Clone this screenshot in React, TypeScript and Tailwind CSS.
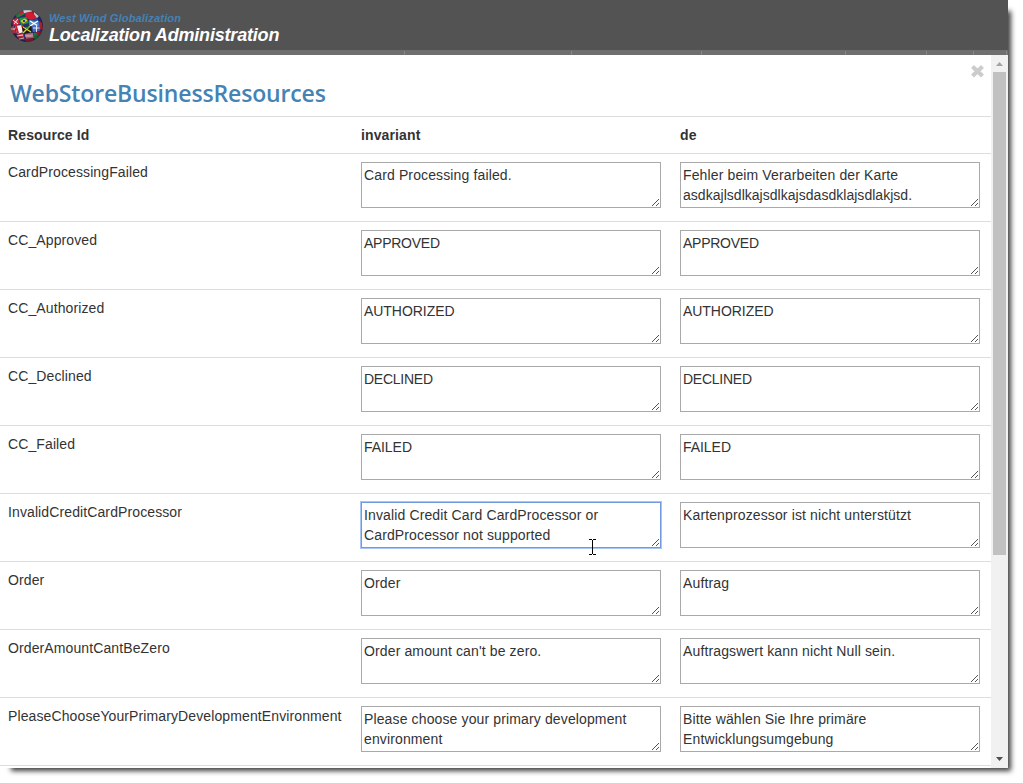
import React from "react";

type Row = { id: string; invariant: string[]; de: string[]; focused?: boolean };

const rows: Row[] = [
  { id: "CardProcessingFailed", invariant: ["Card Processing failed."], de: ["Fehler beim Verarbeiten der Karte", "asdkajlsdlkajsdlkajsdasdklajsdlakjsd."] },
  { id: "CC_Approved", invariant: ["APPROVED"], de: ["APPROVED"] },
  { id: "CC_Authorized", invariant: ["AUTHORIZED"], de: ["AUTHORIZED"] },
  { id: "CC_Declined", invariant: ["DECLINED"], de: ["DECLINED"] },
  { id: "CC_Failed", invariant: ["FAILED"], de: ["FAILED"] },
  { id: "InvalidCreditCardProcessor", invariant: ["Invalid Credit Card CardProcessor or", "CardProcessor not supported"], de: ["Kartenprozessor ist nicht unterstützt"], focused: true },
  { id: "Order", invariant: ["Order"], de: ["Auftrag"] },
  { id: "OrderAmountCantBeZero", invariant: ["Order amount can't be zero."], de: ["Auftragswert kann nicht Null sein."] },
  { id: "PleaseChooseYourPrimaryDevelopmentEnvironment", invariant: ["Please choose your primary development", "environment"], de: ["Bitte wählen Sie Ihre primäre", "Entwicklungsumgebung"] },
];

function spacing(line: string) {
  if (line === line.toUpperCase()) return line.length === 8 ? "tracking-[-0.25px]" : "tracking-[-0.05px]";
  return line.startsWith("asdk") ? "tracking-[0.03px]" : "tracking-[0.13px]";
}

function TextBox({ lines, focused }: { lines: string[]; focused?: boolean }) {
  return (
    <div
      className={
        "relative h-[46px] w-[300px] border bg-white pt-[2px] pl-[2px] leading-5 whitespace-nowrap " +
        (focused ? "border-[#6f9ae0] shadow-[0_0_0_1px_#a9c7f5]" : "border-[#a9a9a9]")
      }
    >
      {lines.map((l) => (
        <div key={l} className={spacing(l)}>{l}</div>
      ))}
      <svg className="absolute right-0 bottom-px" width="8" height="8" viewBox="0 0 8 8" shapeRendering="crispEdges" fill="#555">
        {[0, 1, 2, 3, 4, 5, 6].map((i) => (
          <rect key={i} x={i} y={7 - i} width="1" height="1" />
        ))}
        {[0, 1, 2].map((i) => (
          <rect key={i} x={4 + i} y={7 - i} width="1" height="1" />
        ))}
      </svg>
    </div>
  );
}

function Globe() {
  return (
    <svg width="34" height="34" viewBox="0 0 34 34">
      <defs>
        <clipPath id="ball"><circle cx="17" cy="17" r="16" /></clipPath>
        <radialGradient id="shade" cx="48%" cy="45%" r="56%">
          <stop offset="0.65" stopColor="#000" stopOpacity="0" />
          <stop offset="1" stopColor="#101030" stopOpacity="0.55" />
        </radialGradient>
      </defs>
      <g clipPath="url(#ball)">
        <rect width="34" height="34" fill="#27306f" />
        <path d="M5 5l7-4 3 4-8 4z" fill="#2a7a43" />
        <path d="M8 4l4-2 2 2-4 2z" fill="#d6242f" />
        <path d="M13 1l9 0 0 2-8 1z" fill="#e9e9ee" />
        <path d="M15 4l9-2 4 7-7 2-5-2z" fill="#cf1c30" />
        <path d="M24 3l5 4-2 2-3-4z" fill="#e8e8ee" />
        <path d="M26 9l6 6-4-1-4-4z" fill="#2c4fa8" />
        <path d="M9 9l7-1 3 6-8 2z" fill="#219345" />
        <path d="M10.500 12l4-2.500 3 2-4 3z" fill="#f1d52d" />
        <circle cx="14" cy="12" r="1.300" fill="#23409a" />
        <path d="M2 10l6-1 2 6-7 2z" fill="#d22737" />
        <path d="M3 11l5 4M8 10l-4 5" stroke="#fff" strokeWidth="0.900" />
        <path d="M19 11l9 1 2 5-7 1-4-2z" fill="#3f86d5" />
        <path d="M20 17l8-5M20 12l8 5" stroke="#fff" strokeWidth="1.400" />
        <path d="M5 17l7-1 2 7-7 2z" fill="#f4eeee" />
        <path d="M5 17l2 0 2 7-2 1zM11 16l2 0 2 6-2 1z" fill="#cf1f2d" />
        <path d="M0 18l4-1 2 7-4 1z" fill="#d43c47" />
        <path d="M1 20l4 0" stroke="#fff" />
        <path d="M12 18l9-1 1 6-9 2z" fill="#141a14" />
        <path d="M13 18l8 5M20 17l-7 7" stroke="#ded532" strokeWidth="1.300" />
        <path d="M14 18l3 2 3-2.500z" fill="#1e8f42" />
        <path d="M22 17l8-1 0 6-7 1z" fill="#4a6bc4" />
        <path d="M23 19h7M26.500 16v7" stroke="#e9ebf5" />
        <path d="M29 12l3 2 1 6-3 1z" fill="#d92a35" />
        <path d="M6 26l7-2 2 7-6 0z" fill="#c62936" />
        <path d="M7 27l6-1M9 30l5-1" stroke="#eee" strokeWidth="1" />
        <path d="M15 25l8-1 1 5-8 1z" fill="#b96f88" />
        <path d="M15 27h8" stroke="#e6c8d2" strokeWidth="0.800" />
        <path d="M15 30l8-1 1 4-8 1z" fill="#b8202b" />
        <path d="M24 24l7-1-4 8-3-1z" fill="#24853c" />
        <path d="M26 23l6-1-3 5z" fill="#c8202d" />
        <circle cx="17" cy="17" r="16" fill="url(#shade)" />
      </g>
    </svg>
  );
}

const separators = ["ml-[404px]", "ml-[166px]", "ml-[129px]", "ml-[143px]", "ml-[80px]", "ml-[46px]", "ml-[32px]"];

export default function App() {
  return (
    <div className="h-[783px] w-[1023px] overflow-hidden bg-white font-['Liberation_Sans',Arial,sans-serif] text-[14px] leading-5 text-[#333]">
      <div className="relative h-[768px] w-[1008px]">
        <div className="absolute top-[8px] left-[8px] h-[760px] w-[1000px] shadow-[3px_3px_5px_0px_rgba(0,0,0,0.75)]" />
        <div className="relative flex h-full flex-col bg-white">
          <header className="flex h-[50px] shrink-0 bg-[#535353] pt-[9px] pl-[10px]">
            <Globe />
            <div className="ml-[5px] pt-[2px] font-bold whitespace-nowrap italic">
              <div className="text-[11px] leading-[14px] tracking-[0.18px] text-[#4682b4]">West Wind Globalization</div>
              <div className="text-[18px] leading-[20px] tracking-[-0.19px] text-white">Localization Administration</div>
            </div>
          </header>
          <div className="flex h-[5px] shrink-0 overflow-hidden bg-[#6f6f6f] pt-px">
            {separators.map((s) => (
              <i key={s} className={"h-1 w-px shrink-0 bg-[#878787] " + s} />
            ))}
          </div>
          <div className="flex min-h-0 flex-1">
            <main className="w-[991px] overflow-hidden">
              <div className="flex h-[61px] justify-between pr-[6px] pl-[10px]">
                <h1 className="pt-[23px] font-['Open_Sans',sans-serif] text-[23px] leading-[30px] font-semibold tracking-[-0.15px] text-[#4682b4]">WebStoreBusinessResources</h1>
                <svg className="mt-[9px]" width="15" height="15" viewBox="0 0 15 15">
                  <path d="M2.500 2.500l10 9.500M12.500 2.500l-10 9.500" stroke="#ccc" strokeWidth="4.200" />
                </svg>
              </div>
              <div className="grid h-[37px] grid-cols-[353px_319px_1fr] border-t border-[#ddd] pt-2 pl-2 font-bold tracking-[0.12px]">
                <div>Resource Id</div>
                <div>invariant</div>
                <div>de</div>
              </div>
              {rows.map((r) => (
                <div key={r.id} className="grid h-[68px] grid-cols-[353px_319px_1fr] border-t border-[#ddd] pt-2 pl-2">
                  <div className="tracking-[0.11px]">{r.id}</div>
                  <TextBox lines={r.invariant} focused={r.focused} />
                  <TextBox lines={r.de} />
                </div>
              ))}
              <div className="h-[3px] border-t border-[#ddd]" />
            </main>
            <div className="flex w-[17px] flex-col items-center bg-[#f1f1f1]">
              <svg className="h-[17px] shrink-0" width="7" height="17" viewBox="0 0 7 17"><path d="M0 11L3.500 7L7 11z" fill="#a3a3a3" /></svg>
              <div className="mr-[2px] h-[483px] w-[13px] self-end bg-[#c1c1c1]" />
              <svg className="mt-auto h-[17px] shrink-0" width="7" height="17" viewBox="0 0 7 17"><path d="M0 6h7L3.500 10z" fill="#505050" /></svg>
            </div>
          </div>
        </div>
        <svg className="absolute top-[539px] left-[589px]" width="7" height="16" viewBox="0 0 7 16" shapeRendering="crispEdges">
          <path d="M0 .5h3M4 .5h3M0 15.500h3M4 15.500h3M3.500 1v14" stroke="#000" />
        </svg>
      </div>
    </div>
  );
}
